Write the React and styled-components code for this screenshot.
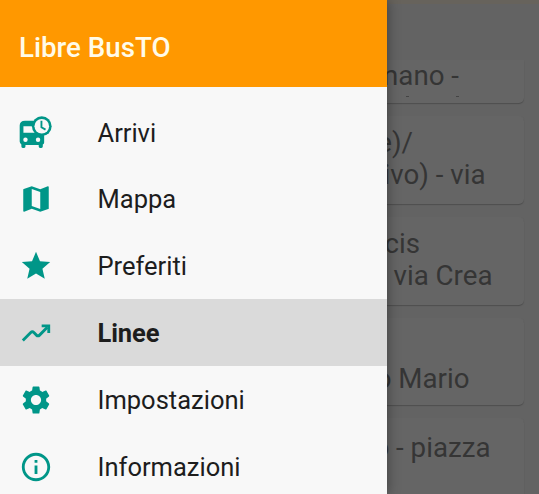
import React from "react";
import styled, { createGlobalStyle } from "styled-components";

const GlobalStyle = createGlobalStyle`
  * { box-sizing: border-box; }
  body { margin: 0; font-family: Roboto, sans-serif; background: #636363; }
`;

const Screen = styled.div`
  position: relative;
  width: 539px;
  height: 494px;
  overflow: hidden;
  background: #636363;
`;

const Page = styled.main`
  height: 100%;
  display: flex;
  flex-direction: column;
`;

const Toolbar = styled.div`
  height: 60px;
  flex: none;
  border-top: 4px solid #67635c;
`;

const CardList = styled.div`
  display: flex;
  flex-direction: column;
  gap: 13px;
  padding: 0 15px 0 14px;
`;

const Card = styled.article`
  flex: none;
  height: ${(p) => p.$height}px;
  padding-top: ${(p) => p.$top}px;
  overflow: hidden;
  border-radius: ${(p) => (p.$cut ? "0 0 5px 5px" : "5px")};
  background: #656565;
  box-shadow: 0 1px 1px #4e4e4e;
`;

const CardLine = styled.div`
  margin-right: ${(p) => p.$end}px;
  height: 32px;
  font-size: 27.7px;
  line-height: 32px;
  text-align: right;
  white-space: nowrap;
  color: #353535;
`;

const ClippedLine = styled.div`
  display: flex;
  justify-content: flex-end;
  gap: 47px;
  padding-right: 65px;
  margin-top: 4px;
`;

const Speck = styled.span`
  width: 3px;
  height: 1px;
  background: #444;
`;

const Drawer = styled.aside`
  position: absolute;
  inset: 0 auto 0 0;
  width: 387px;
  background: #f8f8f8;
  box-shadow: 0 0 12px rgba(0, 0, 0, 0.4);
`;

const Header = styled.header`
  display: flex;
  align-items: center;
  height: 87px;
  padding: 9px 19px 0;
  background: #ff9800;
`;

const Title = styled.h1`
  margin: 0;
  font-size: 27.7px;
  font-weight: 500;
  line-height: 32px;
  color: #fffbe9;
`;

const Menu = styled.nav`
  padding-top: 12px;
`;

const MenuItem = styled.a`
  display: flex;
  align-items: center;
  height: ${(p) => (p.$first ? 66 : 67)}px;
  padding-left: 19px;
  background: ${(p) => (p.$active ? "#dadada" : "transparent")};
  color: #1d1d1d;
  font-size: 25.5px;
  font-weight: ${(p) => (p.$active ? 700 : 400)};
  letter-spacing: ${(p) => (p.$active ? -0.1 : 0)}px;
`;

const Icon = styled.svg`
  width: 34px;
  height: 34px;
  margin-right: 44.5px;
  flex: none;
  fill: #009688;
`;

const Label = styled.span`
  line-height: 30px;
  padding-top: 1px;
`;

const BusClock = () => (
  <Icon viewBox="28 30 100 100">
    <path
      fillRule="evenodd"
      d="M46 47H82V63H41V82H82L102 88V111Q102 115 98 117V123Q98 127 94 127H90Q86 127 86 123V118H47V123Q47 127 43 127H39Q35 127 35 123V117Q30 113 30 108V61Q30 47 46 47Z"
    />
    <circle cx="47" cy="103" r="6.5" fill="#f8f8f8" />
    <circle cx="84" cy="103" r="6.5" fill="#f8f8f8" />
    <circle cx="95" cy="63" r="29" />
    <circle cx="95" cy="63" r="21.5" fill="#f8f8f8" />
    <path d="M94 47V66L106 73" fill="none" stroke="#009688" strokeWidth="5.5" />
  </Icon>
);

const PathIcon = ({ d }) => (
  <Icon viewBox="0 0 24 24">
    <path d={d} />
  </Icon>
);

const TrendIcon = () => (
  <Icon viewBox="0 0 24 24">
    <path
      d="M2.7 17.3L8.3 11.7Q9.4 10.6 10.5 11.7L12.3 13.5Q13.4 14.6 14.5 13.5L20 8"
      fill="none"
      stroke="#009688"
      strokeWidth="2"
    />
    <path d="M16 6H22V12H20V8H16Z" />
  </Icon>
);

const paths = {
  map: "M20.5 3l-.16.03L15 5.1 9 3 3.36 4.9c-.21.07-.36.25-.36.48V20.5c0 .28.22.5.5.5l.16-.03L9 18.9l6 2.1 5.64-1.9c.21-.07.36-.25.36-.48V3.5c0-.28-.22-.5-.5-.5zM15 19l-6-2.11V5l6 2.11V19z",
  star: "M12 17.27L18.18 21l-1.64-7.03L22 9.24l-7.19-.61L12 2 9.19 8.63 2 9.24l5.46 4.73L5.82 21z",
  gear: "M19.14 12.94c.04-.3.06-.61.06-.94 0-.32-.02-.64-.07-.94l2.03-1.58c.18-.14.23-.41.12-.61l-1.92-3.32c-.12-.22-.37-.29-.59-.22l-2.39.96c-.5-.38-1.03-.7-1.62-.94l-.36-2.54c-.04-.24-.24-.41-.48-.41h-3.84c-.24 0-.43.17-.47.41l-.36 2.54c-.59.24-1.13.57-1.62.94l-2.39-.96c-.22-.08-.47 0-.59.22L2.74 8.87c-.12.21-.08.47.12.61l2.03 1.58c-.05.3-.09.63-.09.94s.02.64.07.94l-2.03 1.58c-.18.14-.23.41-.12.61l1.92 3.32c.12.22.37.29.59.22l2.39-.96c.5.38 1.03.7 1.62.94l.36 2.54c.05.24.24.41.48.41h3.84c.24 0 .44-.17.47-.41l.36-2.54c.59-.24 1.13-.56 1.62-.94l2.39.96c.22.08.47 0 .59-.22l1.92-3.32c.12-.22.07-.47-.12-.61l-2.01-1.58zM12 15.6c-1.98 0-3.6-1.62-3.6-3.6s1.62-3.6 3.6-3.6 3.6 1.62 3.6 3.6-1.62 3.6-3.6 3.6z",
  info: "M11 7h2v2h-2zm0 4h2v6h-2zm1-9C6.48 2 2 6.48 2 12s4.48 10 10 10 10-4.48 10-10S17.52 2 12 2zm0 18c-4.41 0-8-3.59-8-8s3.59-8 8-8 8 3.59 8 8-3.59 8-8 8z",
};

const items = [
  { label: "Arrivi", icon: <BusClock /> },
  { label: "Mappa", icon: <PathIcon d={paths.map} /> },
  { label: "Preferiti", icon: <PathIcon d={paths.star} /> },
  { label: "Linee", icon: <TrendIcon />, active: true },
  { label: "Impostazioni", icon: <PathIcon d={paths.gear} /> },
  { label: "Informazioni", icon: <PathIcon d={paths.info} /> },
];

export default function App() {
  return (
    <>
      <GlobalStyle />
      <Screen>
        <Page>
          <Toolbar />
          <CardList>
            <Card $height={43} $top={0} $cut>
              <CardLine $end={65}>mano -</CardLine>
              <ClippedLine>
                <Speck />
                <Speck />
              </ClippedLine>
            </Card>
            <Card $height={88} $top={11}>
              <CardLine $end={111}>e)/</CardLine>
              <CardLine $end={38.5}>ivo) - via</CardLine>
            </Card>
            <Card $height={88} $top={11}>
              <CardLine $end={104}>cis</CardLine>
              <CardLine $end={31.5}>via Crea</CardLine>
            </Card>
            <Card $height={87} $top={45}>
              <CardLine $end={54.5}>o Mario</CardLine>
            </Card>
            <Card $height={88} $top={14}>
              <CardLine $end={33.5}>o - piazza</CardLine>
            </Card>
          </CardList>
        </Page>
        <Drawer>
          <Header>
            <Title>Libre BusTO</Title>
          </Header>
          <Menu>
            {items.map(({ label, icon, active }, i) => (
              <MenuItem key={label} $active={active} $first={i === 0}>
                {icon}
                <Label>{label}</Label>
              </MenuItem>
            ))}
          </Menu>
        </Drawer>
      </Screen>
    </>
  );
}
